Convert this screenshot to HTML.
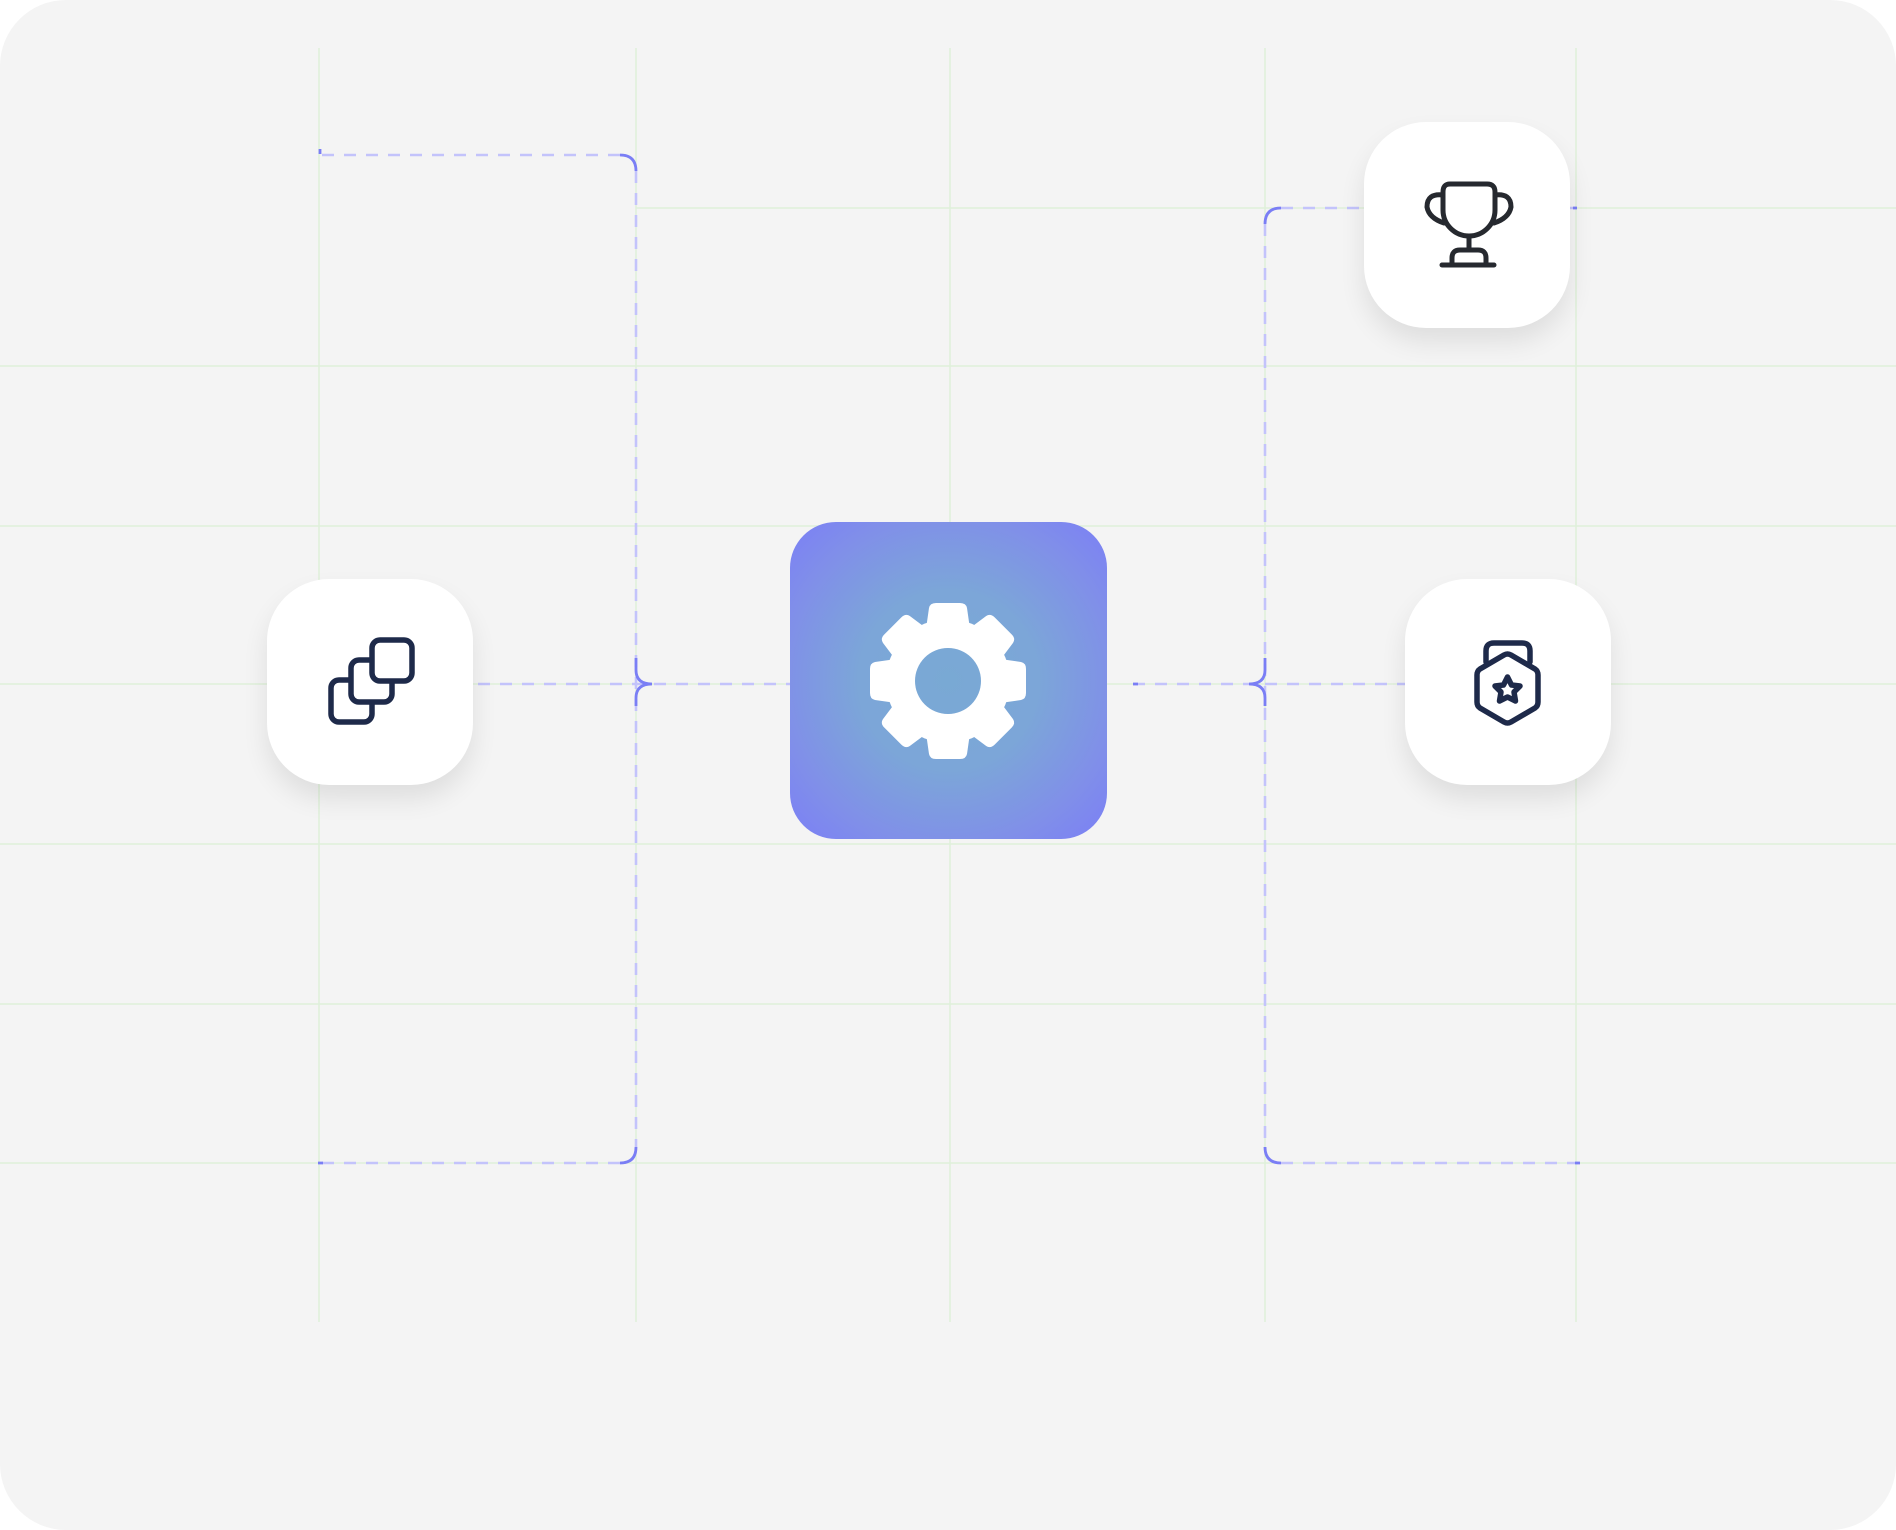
<!DOCTYPE html>
<html><head><meta charset="utf-8"><style>
html,body{margin:0;padding:0;background:#fff;width:1896px;height:1530px;overflow:hidden}
.panel{position:absolute;left:0;top:0;width:1896px;height:1530px;border-radius:66px;background:#f4f4f4;overflow:hidden}
svg{position:absolute;left:0;top:0}
.card{position:absolute;width:206px;height:206px;border-radius:62px;background:#fff;box-shadow:0 14px 26px rgba(0,0,0,0.09)}
.gear{position:absolute;left:790px;top:522px;width:317px;height:317px;border-radius:46px;background:radial-gradient(ellipse at center,#79a9d4 0%,#7ca6d8 40%,#808fe9 75%,#7b7ff6 100%)}
</style></head><body>
<div class="panel">
<svg width="1896" height="1530" viewBox="0 0 1896 1530">
 <g stroke="#dff0da" stroke-width="1.5" fill="none">
  <path d="M319 48V1322M636 48V1322M950 48V1322M1265 48V1322M1576 48V1322"/>
  <path d="M636 208H1896M0 366H1896M0 526H1896M0 684H1896M0 844H1896M0 1004H1896M0 1163H1896"/>
 </g>
 <g stroke="#c3c3fb" stroke-width="2.6" fill="none" stroke-dasharray="12 10">
  <path d="M322 155H620"/>
  <path d="M636 171V1147"/>
  <path d="M620 1163H320"/>
  <path d="M478 684H790"/>
  <path d="M1133 684H1405"/>
  <path d="M1265 224V1147"/>
  <path d="M1281 208H1576"/>
  <path d="M1281 1163H1578"/>
 </g>
 <g stroke="#7a7ef5" stroke-width="2.8" fill="none">
  <path d="M620 155Q636 155 636 171"/>
  <path d="M636 1147Q636 1163 620 1163"/>
  <path d="M1281 208Q1265 208 1265 224"/>
  <path d="M1265 1147Q1265 1163 1281 1163"/>
  <path d="M636 658V670Q636 684 652 684Q636 684 636 698V706"/>
  <path d="M1265 658V670Q1265 684 1249 684Q1265 684 1265 698V706"/>
  <path d="M320 149V154M318 1163H323M1133 684H1138M1573 208H1577M1575 1163H1580"/>
 </g>
</svg>
<div class="card" style="left:267px;top:579px"></div>
<div class="card" style="left:1364px;top:122px"></div>
<div class="card" style="left:1405px;top:579px"></div>
<div class="gear"></div>
<svg width="1896" height="1530" viewBox="0 0 1896 1530">
 <defs>
  <mask id="m"><rect x="0" y="0" width="1896" height="1530" fill="#fff"/><circle cx="948" cy="681" r="33" fill="#000"/></mask>
  <path id="t" d="M923 650L929 608Q930 603 936 603H960Q966 603 967 608L973 650Z"/>
 </defs>
 <g fill="#fff" mask="url(#m)">
  <circle cx="948" cy="681" r="62"/>
  <use href="#t"/>
  <use href="#t" transform="rotate(45 948 681)"/>
  <use href="#t" transform="rotate(90 948 681)"/>
  <use href="#t" transform="rotate(135 948 681)"/>
  <use href="#t" transform="rotate(180 948 681)"/>
  <use href="#t" transform="rotate(225 948 681)"/>
  <use href="#t" transform="rotate(270 948 681)"/>
  <use href="#t" transform="rotate(315 948 681)"/>
 </g>
 <g stroke="#1e2a4a" stroke-width="5.5" fill="#fff">
  <rect x="331" y="680" width="41" height="42" rx="8"/>
  <rect x="351" y="660" width="41" height="42" rx="8"/>
  <rect x="372" y="640" width="40" height="41" rx="8"/>
 </g>
 <g stroke="#26292f" stroke-width="5" fill="none" stroke-linecap="round" stroke-linejoin="round">
  <path d="M1450 184H1487Q1495 184 1495 192V210A26 26 0 0 1 1443 210V192Q1443 184 1450 184Z"/>
  <path d="M1443 195Q1427 193 1427 207Q1429 218 1444 223"/>
  <path d="M1495 195Q1511 193 1511 207Q1509 218 1494 223"/>
  <path d="M1469 237V250"/>
  <path d="M1452 264V258Q1452 250 1460 250H1478Q1486 250 1486 258V264"/>
  <path d="M1442 265H1494"/>
 </g>
 <g stroke="#1e2a4a" stroke-width="5.5" fill="none" stroke-linecap="round" stroke-linejoin="round">
  <path d="M1486 662V651Q1486 643 1494 643H1522Q1530 643 1530 651V662"/>
  <path d="M1504 655Q1507.5 653 1511 655L1535 669Q1538 671 1538 675V702Q1538 706 1535 708L1511 722Q1507.5 724 1504 722L1480 708Q1477 706 1477 702V675Q1477 671 1480 669Z"/>
  <polygon points="1507.5,677 1511.5,685 1520,686 1514,692 1515.5,701 1507.5,697 1499.5,701 1501,692 1495,686 1503.5,685"/>
 </g>
</svg>
</div>
</body></html>
